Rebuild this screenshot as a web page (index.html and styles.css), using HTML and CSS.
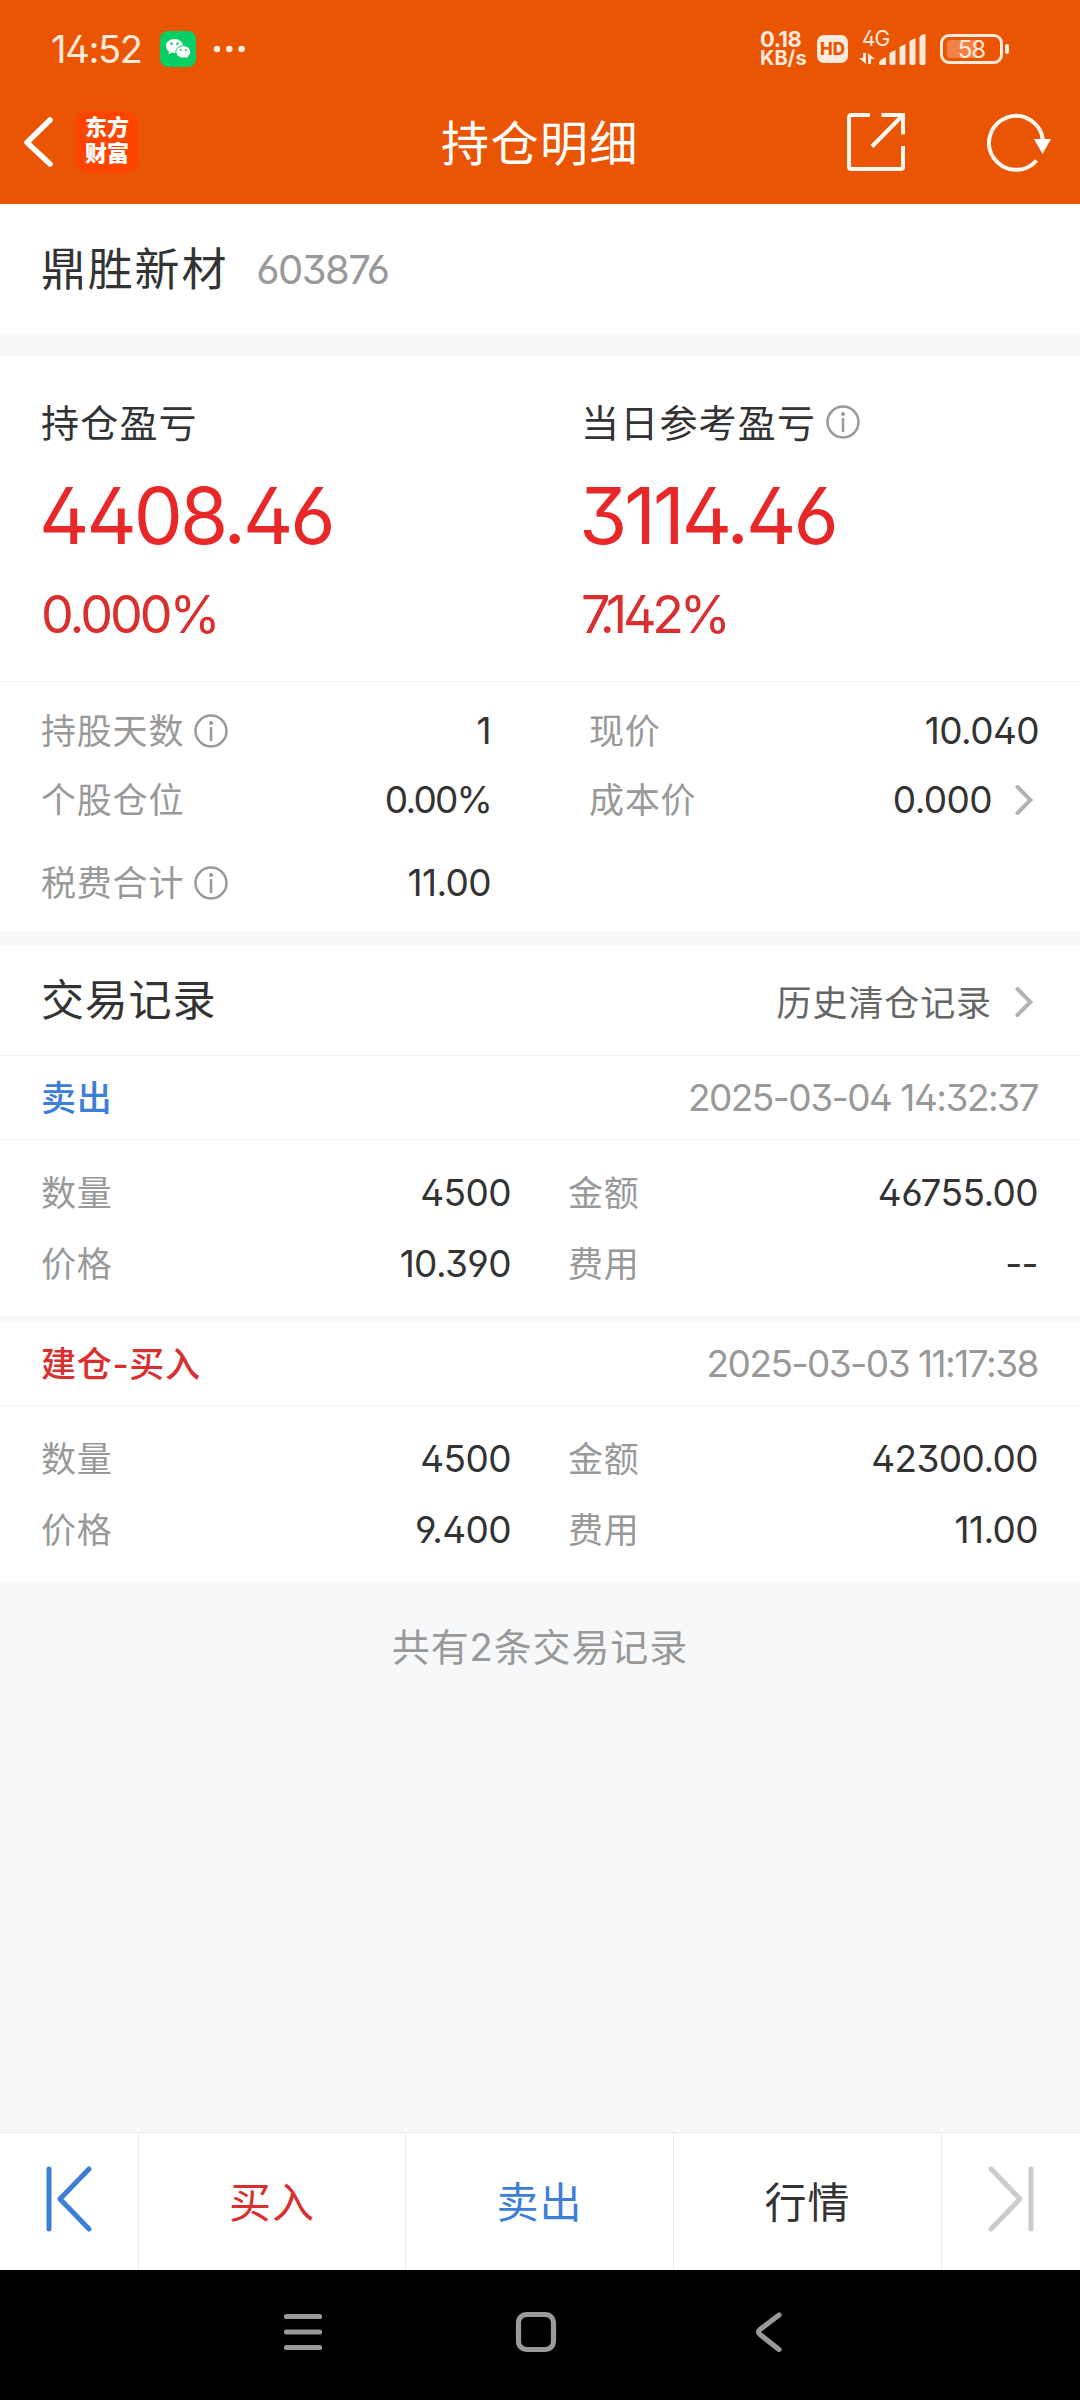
FILE: index.html
```
<!DOCTYPE html>
<html lang="zh">
<head>
    <meta charset="UTF-8">
    <meta name="viewport" content="width=device-width, initial-scale=1.0">
    <title>持仓明细</title>
    <link rel="stylesheet" href="styles.css">
</head>
<body>
    <!-- 顶部 -->
    <header class="header">
        <div class="status-bar">
            <div class="status-left">
                <span class="time">14:52</span>
                <svg class="wechat" width="36" height="36" viewBox="0 0 36 36">
                    <rect width="36" height="36" rx="8" fill="#07cf66"/>
                    <path d="M14.500 8C9.700 8 6 11 6 15c0 2.200 1.200 4.100 3 5.400L8.500 23.300l3.200-1.700c.9.200 1.900.4 2.800.4C19.300 22 23 19 23 15s-3.700-7-8.500-7z" fill="#fff"/>
                    <path d="M23.300 14.800c-4.200 0-7.400 2.700-7.400 6.100s3.200 6.100 7.400 6.100c.9 0 1.700-.1 2.500-.3l2.600 1.300-.5-2.400c1.600-1.100 2.700-2.800 2.700-4.700 0-3.400-3.200-6.100-7.300-6.100z" fill="#fff" stroke="#07cf66" stroke-width="1"/>
                    <g fill="#07cf66">
                        <circle cx="11.500" cy="12.800" r="1.300"/>
                        <circle cx="17.500" cy="12.800" r="1.300"/>
                        <circle cx="20.800" cy="19" r="1"/>
                        <circle cx="25.800" cy="19" r="1"/>
                    </g>
                </svg>
                <svg class="dots" width="32" height="8" viewBox="0 0 32 8" fill="#fdeee2">
                    <circle cx="4" cy="4" r="3.200"/>
                    <circle cx="16.300" cy="4" r="3.200"/>
                    <circle cx="28.600" cy="4" r="3.200"/>
                </svg>
            </div>
            <div class="status-right">
                <div class="net-speed"><span class="num">0.18</span><span class="unit">KB/s</span></div>
                <span class="hd">HD</span>
                <div class="signal">
                    <span class="net-type">4G</span>
                    <svg width="68" height="34" viewBox="0 0 68 34" fill="#fdeada">
                        <path d="M4 21h3v11L0 26h4zM9 32V21l7 6h-4v5z"/>
                        <path d="M20 31q0-3 7-6v8h-6q-1 0-1-2zM30.500 21l6-3v13q0 2-2 2h-2q-2 0-2-2zM40.500 15l6-3v19q0 2-2 2h-2q-2 0-2-2zM50.500 9l6-3v25q0 2-2 2h-2q-2 0-2-2zM60.500 5q2-3 6-3v29q0 2-2 2h-2q-2 0-2-2z"/>
                    </svg>
                </div>
                <div class="battery">
                    <span class="battery-level"></span>
                    <span class="battery-text">58</span>
                </div>
                <span class="battery-cap"></span>
            </div>
        </div>
        <div class="title-bar">
            <div class="title-left">
                <svg width="32" height="52" viewBox="0 0 32 52" fill="none" stroke="#fff" stroke-width="5.500" stroke-linecap="round" stroke-linejoin="round">
                    <path d="M27 4L4 26.500 27 48"/>
                </svg>
                <div class="logo">东方<br>财富</div>
            </div>
            <h1>持仓明细</h1>
            <div class="title-right">
                <svg width="60" height="60" viewBox="0 0 60 60" fill="none" stroke="#fff8f0" stroke-width="4">
                    <path d="M24 3H5.500Q3 3 3 5.500v49Q3 57 5.500 57h49q2.500 0 2.500-2.500V34M35.500 3H57v19.500M26 34.500L56 4"/>
                </svg>
                <svg width="67" height="60" viewBox="0 0 67 60" fill="none" stroke="#fff8f0" stroke-width="4">
                    <path d="M50.500 48.500A27 27 0 1 1 57 29"/>
                    <path d="M48 27h17l-8.500 15z" fill="#fff" stroke="none"/>
                </svg>
            </div>
        </div>
    </header>

    <!-- 股票名称 -->
    <section class="stock">
        <span class="stock-name">鼎胜新材</span>
        <span class="stock-code">603876</span>
    </section>

    <!-- 盈亏 -->
    <section class="profit">
        <div class="profit-item">
            <div class="profit-label">持仓盈亏</div>
            <div class="profit-value">4408.46</div>
            <div class="profit-rate">0.000%</div>
        </div>
        <div class="profit-item">
            <div class="profit-label">当日参考盈亏
                <svg class="info" viewBox="0 0 34 34"><circle cx="17" cy="17" r="15.500"/><path d="M17 14v12"/><circle class="dot" cx="17" cy="9" r="2"/></svg>
            </div>
            <div class="profit-value">3114.46</div>
            <div class="profit-rate today">7.142%</div>
        </div>
    </section>

    <!-- 持仓详情 -->
    <section class="detail">
        <div class="cell">
            <span class="label">持股天数</span>
            <svg class="info" viewBox="0 0 34 34"><circle cx="17" cy="17" r="15.500"/><path d="M17 14v12"/><circle class="dot" cx="17" cy="9" r="2"/></svg>
            <span class="value">1</span>
        </div>
        <div class="cell">
            <span class="label">现价</span>
            <span class="value">10.040</span>
        </div>
        <div class="cell">
            <span class="label">个股仓位</span>
            <span class="value percent">0.00%</span>
        </div>
        <div class="cell">
            <span class="label">成本价</span>
            <span class="value">0.000</span>
            <svg class="arrow" viewBox="0 0 18 32"><path d="M2.500 3L15.500 16 2.500 29"/></svg>
        </div>
        <div class="cell last">
            <span class="label">税费合计</span>
            <svg class="info" viewBox="0 0 34 34"><circle cx="17" cy="17" r="15.500"/><path d="M17 14v12"/><circle class="dot" cx="17" cy="9" r="2"/></svg>
            <span class="value">11.00</span>
        </div>
    </section>

    <!-- 交易记录 -->
    <section class="records">
        <div class="records-head">
            <h2>交易记录</h2>
            <a class="history"><span>历史清仓记录</span><svg class="arrow" viewBox="0 0 18 32"><path d="M2.500 3L15.500 16 2.500 29"/></svg></a>
        </div>

        <div class="record">
            <div class="record-head">
                <span class="type sell">卖出</span>
                <span class="date">2025-03-04 14:32:37</span>
            </div>
            <div class="record-body">
                <div class="cell"><span class="label">数量</span><span class="value">4500</span></div>
                <div class="cell"><span class="label">金额</span><span class="value">46755.00</span></div>
                <div class="cell"><span class="label">价格</span><span class="value">10.390</span></div>
                <div class="cell"><span class="label">费用</span><span class="value">--</span></div>
            </div>
        </div>

        <div class="record">
            <div class="record-head">
                <span class="type buy">建仓-买入</span>
                <span class="date">2025-03-03 11:17:38</span>
            </div>
            <div class="record-body">
                <div class="cell"><span class="label">数量</span><span class="value">4500</span></div>
                <div class="cell"><span class="label">金额</span><span class="value">42300.00</span></div>
                <div class="cell"><span class="label">价格</span><span class="value">9.400</span></div>
                <div class="cell"><span class="label">费用</span><span class="value">11.00</span></div>
            </div>
        </div>
    </section>

    <p class="total">共有2条交易记录</p>

    <!-- 底部操作栏 -->
    <footer class="actions">
        <button class="action side prev">
            <svg width="46" height="66" viewBox="0 0 46 66"><path d="M3 3v60M43 3L14 33l29 30"/></svg>
        </button>
        <button class="action buy">买入</button>
        <button class="action sell">卖出</button>
        <button class="action">行情</button>
        <button class="action side next">
            <svg width="46" height="66" viewBox="0 0 46 66"><path d="M43 3v60M3 3l29 30L3 63"/></svg>
        </button>
    </footer>

    <!-- 系统导航栏 -->
    <nav class="nav-bar">
        <svg width="42" height="42" viewBox="0 0 42 42"><path d="M4.500 5.500h33M4.500 21h33M4.500 36.500h33"/></svg>
        <svg width="42" height="42" viewBox="0 0 42 42"><rect x="3.500" y="3.500" width="35" height="35" rx="8"/></svg>
        <svg width="42" height="42" viewBox="0 0 42 42"><path d="M31 4L12 18.500q-3 2.500 0 5L31 38.500"/></svg>
    </nav>
</body>
</html>
```
FILE: styles.css
```
/* 全局样式 */
* {
    margin: 0;
    padding: 0;
    box-sizing: border-box;
}

body {
    font-family: Inter, "Noto Sans CJK SC", sans-serif;
    font-feature-settings: "ss01", "cv09";
    background: #f7f8fa;
    color: #333333;
    width: 1080px;
    height: 2400px;
    display: flex;
    flex-direction: column;
    overflow: hidden;
}

svg {
    display: block;
    flex-shrink: 0;
}

/* 顶部 */
.header {
    height: 204px;
    background: #ea5504;
    color: #ffffff;
}

.status-bar {
    height: 98px;
    padding: 0 71px 0 51px;
    display: flex;
    justify-content: space-between;
    align-items: center;
    color: #fdeada;
}

.status-left,
.status-right {
    display: flex;
    align-items: center;
}

.time {
    width: 109px;
    font-size: 38px;
    letter-spacing: -1.3px;
}

.dots {
    margin-left: 17px;
}

.net-speed {
    width: 57px;
    display: flex;
    flex-direction: column;
    font-weight: 700;
}

.net-speed .num {
    font-size: 22px;
    line-height: 19px;
    letter-spacing: -0.5px;
}

.net-speed .unit {
    font-size: 20px;
    line-height: 19px;
}

.hd {
    width: 31px;
    height: 28px;
    line-height: 28px;
    border-radius: 7px;
    background: #fdeada;
    color: #ea5504;
    font-size: 17px;
    font-weight: 800;
    text-align: center;
}

.signal {
    position: relative;
    margin-left: 11px;
}

.net-type {
    position: absolute;
    left: 3px;
    top: -5px;
    font-size: 21px;
    line-height: 24px;
    letter-spacing: -1px;
}

.battery {
    position: relative;
    width: 63px;
    height: 30px;
    margin-left: 13px;
    border: 3px solid #fdeada;
    border-radius: 9px;
    text-align: center;
}

.battery-level {
    position: absolute;
    left: 4px;
    top: 3px;
    width: 30px;
    height: 18px;
    border-radius: 3px;
    background: #f28047;
}

.battery-text {
    position: relative;
    display: block;
    font-size: 24px;
    line-height: 25px;
    letter-spacing: -1px;
}

.battery-cap {
    width: 4px;
    height: 10px;
    margin-left: 2px;
    border-radius: 2px;
    background: #fdeada;
}

.title-bar {
    height: 88px;
    padding: 0 27px 0 23px;
    display: grid;
    grid-template-columns: 418px 1fr 207px;
    align-items: center;
}

.title-left {
    display: flex;
    align-items: center;
    gap: 21px;
}

.logo {
    width: 62px;
    height: 62px;
    padding-top: 3px;
    border-radius: 13px;
    background: #ff4400;
    font-size: 22px;
    font-weight: 900;
    line-height: 26px;
    text-align: center;
}

.title-bar h1 {
    padding-bottom: 5px;
    font-size: 48px;
    font-weight: 400;
    letter-spacing: 1.5px;
}

.title-right {
    display: flex;
    justify-content: space-between;
}

/* 股票名称 */
.stock {
    height: 130px;
    padding: 0 41px;
    display: flex;
    align-items: center;
    gap: 28px;
    background: #ffffff;
}

.stock-name {
    padding-bottom: 5px;
    font-size: 45px;
    letter-spacing: 1.8px;
}

.stock-code {
    font-size: 40px;
    color: #999999;
    letter-spacing: -1.5px;
}

/* 盈亏 */
.profit {
    height: 326px;
    margin-top: 22px;
    padding: 40px 41px 0;
    display: grid;
    grid-template-columns: 540px 1fr;
    background: #ffffff;
    border-bottom: 1px solid #f4f4f4;
}

.profit-label {
    height: 48px;
    display: flex;
    align-items: center;
    font-size: 38px;
    letter-spacing: 1.2px;
}

.info {
    width: 34px;
    height: 34px;
    margin-left: 10px;
    fill: none;
    stroke: #999999;
    stroke-width: 2.5;
    stroke-linecap: round;
}

.profit-label .info {
    margin-top: 4px;
}

.info .dot {
    fill: #999999;
    stroke: none;
}

.profit-value {
    margin-top: 25px;
    margin-left: -2px;
    font-size: 78px;
    line-height: 94px;
    letter-spacing: -3px;
    color: #e82828;
}

.profit-rate {
    margin-top: 20px;
    font-size: 52px;
    line-height: 64px;
    letter-spacing: -3px;
    color: #d92f2f;
}

.profit-rate.today {
    letter-spacing: -4.2px;
}

/* 持仓详情 */
.detail {
    height: 249px;
    padding: 14px 41px 0;
    display: grid;
    grid-template-columns: 450px 450px;
    grid-template-rows: 69px 69px 97px;
    column-gap: 98px;
    background: #ffffff;
}

.cell {
    display: flex;
    align-items: center;
}

.label {
    padding-bottom: 4px;
    font-size: 35px;
    letter-spacing: 0.8px;
    color: #999999;
}

.value {
    margin-left: auto;
    font-size: 37px;
    letter-spacing: -0.6px;
}

.value.percent {
    letter-spacing: -1.8px;
}

.arrow {
    width: 18px;
    height: 32px;
    margin-left: 23px;
    margin-right: 6px;
    fill: none;
    stroke: #b3b3b3;
    stroke-width: 4;
    stroke-linecap: round;
}

/* 交易记录 */
.records {
    margin-top: 14px;
}

.records-head {
    height: 111px;
    padding: 0 41px;
    display: flex;
    align-items: center;
    justify-content: space-between;
    background: #ffffff;
    border-bottom: 1px solid #f4f4f4;
}

.records-head h2 {
    padding-bottom: 6px;
    font-size: 43px;
    font-weight: 400;
    letter-spacing: 0.8px;
}

.history {
    display: flex;
    align-items: center;
    padding-top: 4px;
    font-size: 35px;
    letter-spacing: 0.9px;
    color: #666666;
}

.history span {
    padding-bottom: 4px;
}

.record {
    background: #ffffff;
}

.record + .record {
    margin-top: 6px;
}

.record-head {
    height: 84px;
    padding: 0 42px 0 41px;
    display: flex;
    align-items: center;
    justify-content: space-between;
    border-bottom: 1px solid #f4f4f4;
}

.type {
    padding-bottom: 4px;
    font-size: 35px;
    font-weight: 500;
    letter-spacing: 0.7px;
}

.date {
    font-size: 37px;
    letter-spacing: -1.5px;
    color: #999999;
}

.record-body {
    height: 176px;
    padding: 17px 42px 0 41px;
    display: grid;
    grid-template-columns: 470px 470px;
    grid-template-rows: 71px 71px;
    column-gap: 57px;
}

.buy {
    color: #d92f2f;
}

.sell {
    color: #3d7fd6;
}

.total {
    margin-top: 38px;
    font-size: 38px;
    line-height: 54px;
    letter-spacing: 0.9px;
    text-align: center;
    color: #999999;
}

/* 底部操作栏 */
.actions {
    height: 138px;
    margin-top: auto;
    display: grid;
    grid-template-columns: 139px 267px 268px 268px 138px;
    background: #ffffff;
    border-top: 1px solid #ebebeb;
}

.action {
    padding-bottom: 5px;
    display: flex;
    align-items: center;
    justify-content: center;
    border: none;
    border-right: 1px solid #ebebeb;
    background: none;
    font-family: inherit;
    font-size: 42px;
    letter-spacing: 1px;
}

.action:not(.buy):not(.sell) {
    color: #333333;
}

.action svg {
    fill: none;
    stroke: #3d7fd6;
    stroke-width: 5;
    stroke-linecap: round;
    stroke-linejoin: round;
}

.action.next {
    border-right: none;
}

.action.next svg {
    stroke: #cccccc;
}

/* 系统导航栏 */
.nav-bar {
    height: 130px;
    padding: 0 290px 6px 282px;
    display: flex;
    align-items: center;
    justify-content: space-between;
    background: #000000;
}

.nav-bar svg {
    fill: none;
    stroke: #999999;
    stroke-width: 5.2;
    stroke-linecap: round;
}
```
